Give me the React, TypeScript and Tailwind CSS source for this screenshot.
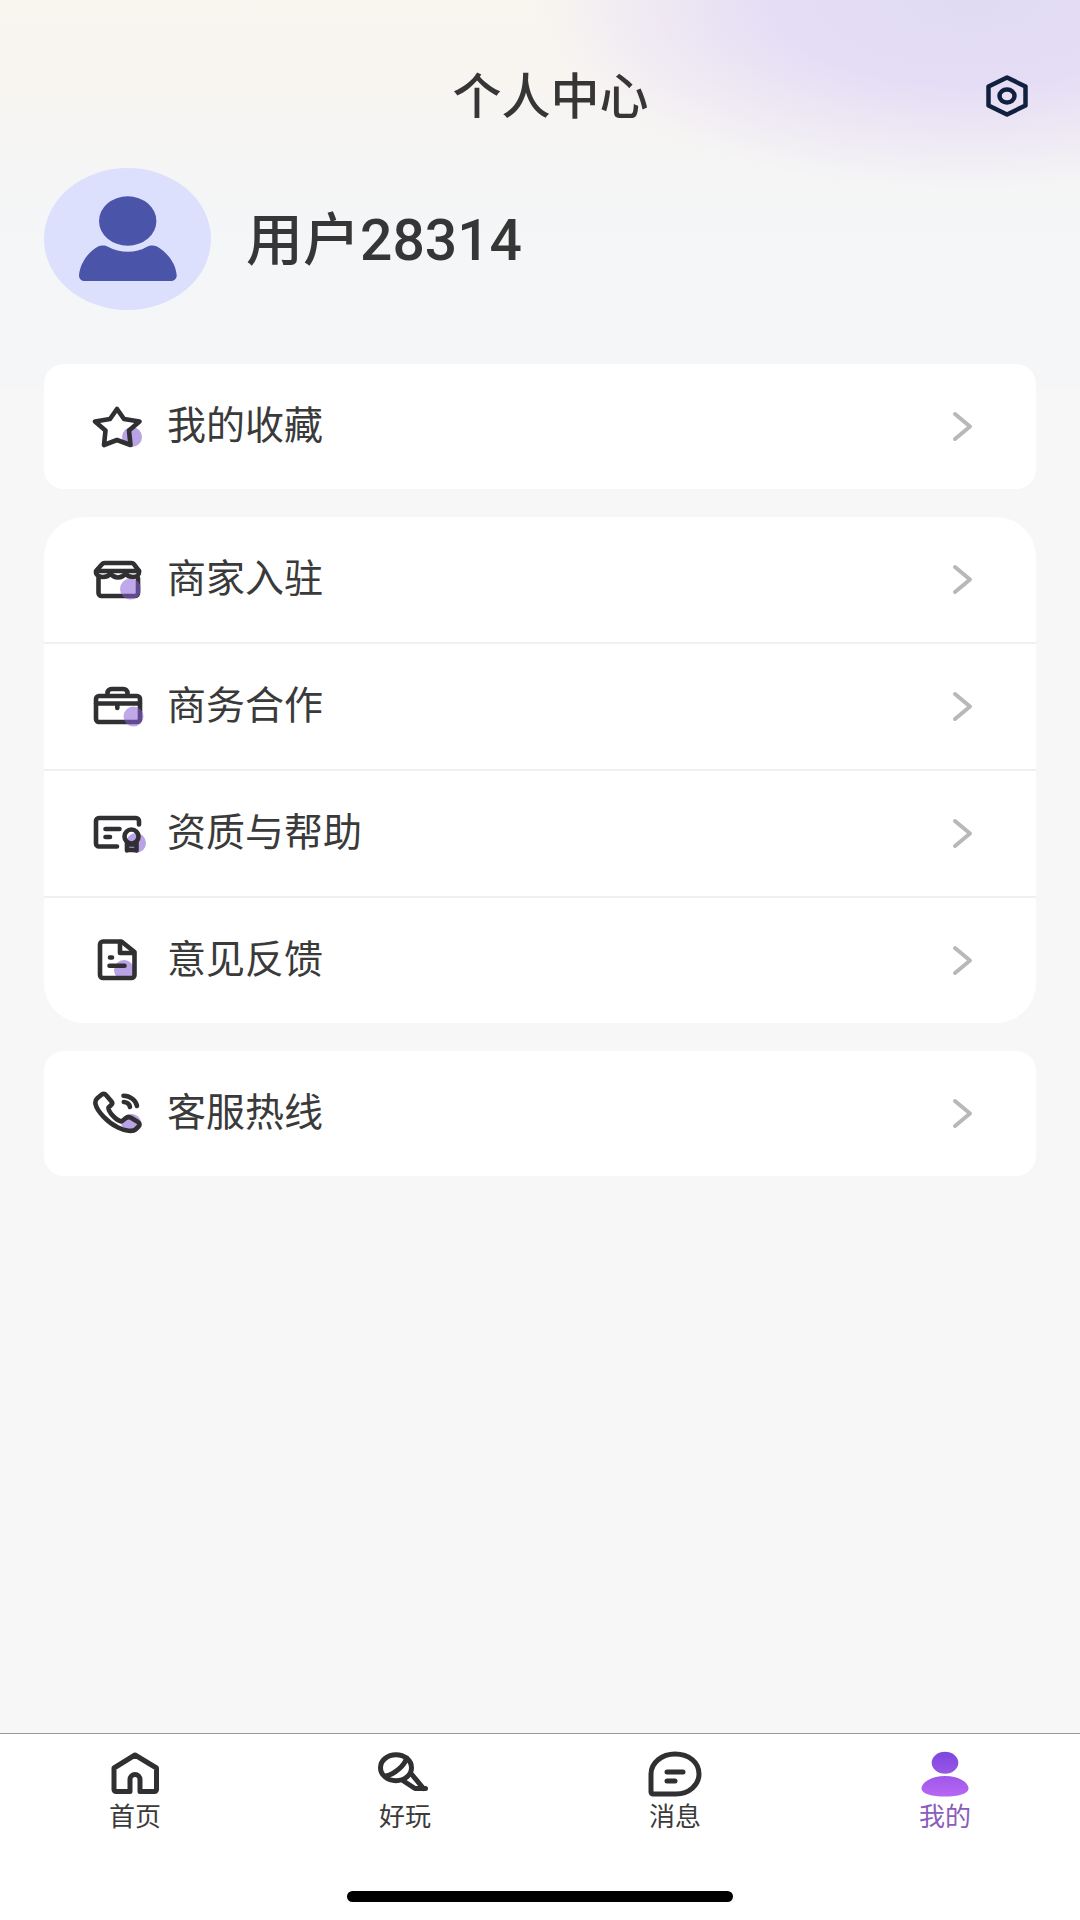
import { ReactNode } from "react";

type MenuRowProps = {
	label: string;
	icon: ReactNode;
};

type TabProps = {
	label: string;
	icon: ReactNode;
	active?: boolean;
};

const MenuIcon = ({ children }: { children: ReactNode }) => (
	<svg
		viewBox="0 0 54 48"
		className="w-[54px] h-12 shrink-0"
		fill="none"
		stroke="#303033"
		strokeWidth="4.6"
		strokeLinecap="round"
		strokeLinejoin="round"
		aria-hidden="true"
	>
		{children}
	</svg>
);

const TabIcon = ({ children }: { children: ReactNode }) => (
	<svg
		viewBox="0 0 54 48"
		className="w-[54px] h-12"
		fill="none"
		stroke="#303033"
		strokeWidth="5"
		strokeLinecap="round"
		strokeLinejoin="round"
		aria-hidden="true"
	>
		{children}
	</svg>
);

const Dot = ({ cx, cy, r = 10 }: { cx: number; cy: number; r?: number }) => (
	<circle cx={cx} cy={cy} r={r} fill="#b9a2e6" stroke="none" />
);

const StarIcon = () => (
	<MenuIcon>
		<Dot cx={40} cy={34} />
		<path d="M25 6 32 16 47.5 18.5 37 27.5 38.5 42 25 37 12 42 13.5 27.500 3 18.500 18 16Z" />
	</MenuIcon>
);

const StoreIcon = () => (
	<MenuIcon>
		<path d="M6.500 22V37a3 3 0 0 0 3 3H43a3 3 0 0 0 3-3V22" />
		<path d="M12.500 7H39.500a3 3 0 0 1 2.400 1.200L47 15v1.500c0 2.500-2.500 4.500-6 4.500s-6-1.300-7.500-3.500c-1.500 2.200-4 4-7.500 4s-6-1.800-7.500-4c-1.500 2.200-4 3.500-7.500 3.500S4 19 4 16.500V15l6-6.800A3.200 3.200 0 0 1 12.500 7Z" />
		<path d="M5 15H47" />
		<circle cx="38.500" cy="33" r="10.500" fill="#8b62d6" fillOpacity="0.55" stroke="none" />
	</MenuIcon>
);

const BriefcaseIcon = () => (
	<MenuIcon>
		<path d="M7 13H45a3 3 0 0 1 3 3V36a3 3 0 0 1-3 3H7a3 3 0 0 1-3-3V16a3 3 0 0 1 3-3Z" />
		<path d="M15.500 12V10a4 4 0 0 1 4-4H31.500a4 4 0 0 1 4 4V12M4 20.500H48M25.300 21v4" />
		<circle cx="41.500" cy="33.500" r="10" fill="#8b62d6" fillOpacity="0.55" stroke="none" />
	</MenuIcon>
);

const CertificateIcon = () => (
	<MenuIcon>
		<Dot cx={44} cy={33} />
		<path d="M47 14.500V11a3 3 0 0 0-3-3H7a3 3 0 0 0-3 3V33.500a3 3 0 0 0 3 3H25M13.500 19H27.500M13.500 27H18" />
		<circle cx="39.500" cy="26.500" r="7" />
		<path d="M35 33V40.500M44.500 33V40.500M35 34.500H44.500M35 40H44.500" />
	</MenuIcon>
);

const DocumentIcon = () => (
	<MenuIcon>
		<Dot cx={32} cy={33} />
		<path d="M11 4.500H29.500L42.500 15V38a3 3 0 0 1-3 3H11a3 3 0 0 1-3-3V7.500a3 3 0 0 1 3-3Z" />
		<path d="M28 5V16H42M18 20.500H20M17.500 28.700H32.500" />
	</MenuIcon>
);

const PhoneIcon = () => (
	<MenuIcon>
		<ellipse cx="39" cy="32.500" rx="10" ry="8.500" fill="#b9a2e6" stroke="none" />
		<path d="M5.500 8 9.500 4.700C11 3.700 13 3.800 14.200 5.200L19.500 11.500C20.500 12.700 20.300 14 19.200 15L16.500 17.500C16 21.500 24 30.500 29.500 31.500L34 28C35.500 27 37.500 27 39 27.800L46 32C47.800 33 48 35 46.600 36.500L43.500 39.500C41 42 33 41 26 37.500 15 32 5 21 3.500 14 3 11.500 3.800 9.500 5.500 8Z" />
		<path d="M31.500 5.800C38 5.700 44 10.500 45 16M31.800 12C35 12.300 37.500 14.200 38 17" />
	</MenuIcon>
);

const HomeIcon = () => (
	<TabIcon>
		<path d="M27 5 48.500 18V39.500a2 2 0 0 1-2 2H32V29.500a5 5 0 0 0-10 0V41.500H8a2 2 0 0 1-2-2V18Z" />
	</TabIcon>
);

const MicIcon = () => (
	<TabIcon>
		<ellipse cx="18" cy="17.700" rx="15.500" ry="13" />
		<path d="M28.500 8C27 15 17 24 8 26M33 23.500 45.500 38.500M25.500 31 37 38.500H47.500" />
	</TabIcon>
);

const MessageIcon = () => (
	<TabIcon>
		<path d="M3 42V24C3 12.500 14 4 27 4 41 4 51 12.500 51 24 51 35 41 44 28 44H5a2 2 0 0 1-2-2Z" />
		<path d="M19 22H35M19 31H27" />
	</TabIcon>
);

const ProfileIcon = () => (
	<TabIcon>
		<defs>
			<linearGradient id="profile" x1="0" y1="0" x2="0" y2="48" gradientUnits="userSpaceOnUse">
				<stop stopColor="#7a45dc" />
				<stop offset="1" stopColor="#bb68f4" />
			</linearGradient>
		</defs>
		<g fill="url(#profile)" stroke="none">
			<ellipse cx="27" cy="12.800" rx="13.300" ry="11" />
			<path d="M27 26C40 26 50.500 32 50.500 38.500 50.500 44 40 46.500 27 46.500S3.500 44 3.500 38.500C3.500 32 14.500 26 27 26Z" />
		</g>
	</TabIcon>
);

const Avatar = () => (
	<svg viewBox="0 0 167 142" className="w-[167px] h-[142px] shrink-0" aria-hidden="true">
		<ellipse cx="83.500" cy="71" rx="83.500" ry="71" fill="#dde0fd" />
		<ellipse cx="83.700" cy="53" rx="28.700" ry="24.700" fill="#4a55a9" />
		<path
			d="M54 78.500C57 77 61 77 64 78.800 76 85.500 92 85.500 103 78.800 106 77 110 77 113 78.500 124 85 132 96 132.700 107.500 132.700 111 130 113 126.500 113H41C37.500 113 35 111 35 107.500 36 96 43 85 54 78.500Z"
			fill="#4a55a9"
		/>
	</svg>
);

const MenuRow = ({ label, icon }: MenuRowProps) => {
	return (
		<li>
			<button
				type="button"
				className="flex items-center gap-[21px] w-full h-[125px] pl-12 pr-[61px] text-left text-[39px] text-[#3a3a3a]"
			>
				{icon}
				<span className="flex-1">{label}</span>
				<svg
					viewBox="0 0 24 32"
					className="w-6 h-8"
					fill="none"
					stroke="#b8b8b8"
					strokeWidth="4"
					strokeLinecap="round"
					strokeLinejoin="round"
					aria-hidden="true"
				>
					<path d="M4 3 19 15.500 4 28" />
				</svg>
			</button>
		</li>
	);
};

const Tab = ({ label, icon, active }: TabProps) => {
	return (
		<a
			href="#"
			aria-current={active ? "page" : undefined}
			className={`flex flex-col items-center gap-1 text-[26px] leading-[30px] ${
				active ? "text-[#8a5cbc]" : "text-[#3a3a3a]"
			}`}
		>
			{icon}
			<span>{label}</span>
		</a>
	);
};

const App = () => {
	return (
		<div className="flex flex-col min-h-screen bg-[#f7f7f7] bg-[radial-gradient(ellipse_440px_190px_at_90%_0px,#e0dbf3_0%,#e5ddf5_45%,#e9e1f5b0_70%,#f0eaf500_100%),linear-gradient(180deg,#f9f6f0_0px,#f8f5f1_80px,#f5f5f5_170px,#f4f6f8_260px,#f4f6f8_388px)] bg-[size:100%_388px] bg-no-repeat font-['Roboto','Noto_Sans_CJK_SC',sans-serif]">
			<header className="flex items-center h-[136px] pt-14 pl-[116px] pr-[51px]">
				<h1 className="flex-1 pt-1 text-center text-[49px] font-medium text-[#363636]">个人中心</h1>
				<button type="button" aria-label="设置" className="w-11 h-11">
					<svg viewBox="0 0 44 44" fill="none" stroke="#12203f" strokeLinejoin="round">
						<path d="M22 3.500 40.500 12.500V31.500L22 40.500 3.500 31.500V12.500Z" strokeWidth="4.500" />
						<ellipse cx="22" cy="22" rx="7.500" ry="6.500" strokeWidth="4.500" />
					</svg>
				</button>
			</header>

			<main className="flex-1 px-11 pt-8">
				<section className="flex items-center gap-[35px] mb-[54px]">
					<Avatar />
					<h2 className="pt-1 text-[57px] font-medium text-[#363636] leading-[72px]">用户28314</h2>
				</section>

				<div className="flex flex-col gap-7">
					<ul className="bg-white rounded-[20px]">
						<MenuRow label="我的收藏" icon={<StarIcon />} />
					</ul>
					<ul className="bg-white rounded-[40px] divide-y-2 divide-[#f0f0f0]">
						<MenuRow label="商家入驻" icon={<StoreIcon />} />
						<MenuRow label="商务合作" icon={<BriefcaseIcon />} />
						<MenuRow label="资质与帮助" icon={<CertificateIcon />} />
						<MenuRow label="意见反馈" icon={<DocumentIcon />} />
					</ul>
					<ul className="bg-white rounded-[20px]">
						<MenuRow label="客服热线" icon={<PhoneIcon />} />
					</ul>
				</div>
			</main>

			<footer className="bg-white border-t border-[#979797] pt-4 pb-[18px]">
				<nav className="grid grid-cols-4">
					<Tab label="首页" icon={<HomeIcon />} />
					<Tab label="好玩" icon={<MicIcon />} />
					<Tab label="消息" icon={<MessageIcon />} />
					<Tab label="我的" icon={<ProfileIcon />} active />
				</nav>
				<div className="w-[386px] h-[11px] mx-auto mt-[59px] rounded-full bg-black" />
			</footer>
		</div>
	);
};

export default App;
